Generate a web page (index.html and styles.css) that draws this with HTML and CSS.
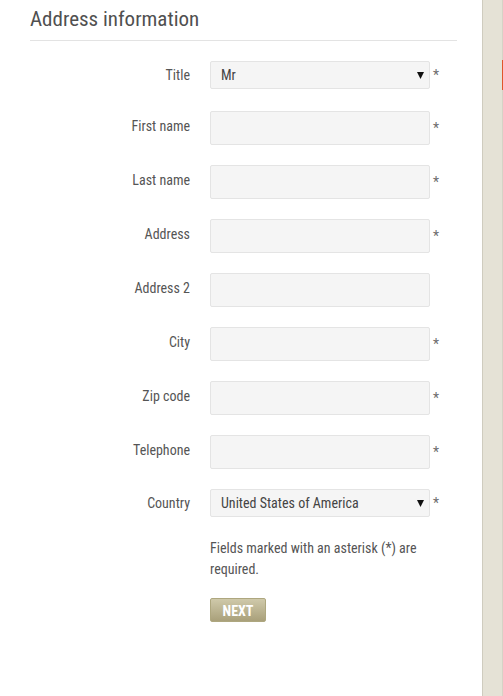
FILE: index.html
```
<!DOCTYPE html>
<html lang="en">
<head>
<meta charset="utf-8">
<title>Address information</title>
<link rel="stylesheet" href="styles.css">
</head>
<body>
<div class="page">
  <main class="content">
    <h2 class="heading">Address information</h2>
    <form class="form">
      <div class="row row-select row-first">
        <label class="label" for="title">Title</label>
        <div class="select-wrap">
          <select id="title" class="field select"><option>Mr</option><option>Mrs</option><option>Ms</option></select>
          <svg class="arrow" width="7" height="7" viewBox="0 0 7 7"><path d="M0 0h7L3.5 7z" fill="#111"/></svg>
        </div>
        <span class="req">*</span>
      </div>
      <div class="row">
        <label class="label" for="first">First name</label>
        <input id="first" class="field" type="text">
        <span class="req">*</span>
      </div>
      <div class="row">
        <label class="label" for="last">Last name</label>
        <input id="last" class="field" type="text">
        <span class="req">*</span>
      </div>
      <div class="row">
        <label class="label" for="addr">Address</label>
        <input id="addr" class="field" type="text">
        <span class="req">*</span>
      </div>
      <div class="row">
        <label class="label" for="addr2">Address 2</label>
        <input id="addr2" class="field" type="text">
      </div>
      <div class="row">
        <label class="label" for="city">City</label>
        <input id="city" class="field" type="text">
        <span class="req">*</span>
      </div>
      <div class="row">
        <label class="label" for="zip">Zip code</label>
        <input id="zip" class="field" type="text">
        <span class="req">*</span>
      </div>
      <div class="row">
        <label class="label" for="tel">Telephone</label>
        <input id="tel" class="field" type="text">
        <span class="req">*</span>
      </div>
      <div class="row row-select">
        <label class="label" for="country">Country</label>
        <div class="select-wrap">
          <select id="country" class="field select"><option>United States of America</option><option>Canada</option></select>
          <svg class="arrow" width="7" height="7" viewBox="0 0 7 7"><path d="M0 0h7L3.5 7z" fill="#111"/></svg>
        </div>
        <span class="req">*</span>
      </div>
      <div class="row row-note">
        <p class="note">Fields marked with an asterisk (*) are required.</p>
      </div>
      <div class="row row-action">
        <button type="button" class="btn-next">NEXT</button>
      </div>
    </form>
  </main>
  <aside class="sidebar"><span class="sidebar-mark"></span></aside>
</div>
</body>
</html>
```

FILE: styles.css
```
* { box-sizing: border-box; }

html, body {
  margin: 0;
  padding: 0;
  background: #fff;
}

body {
  font-family: Roboto, "Liberation Sans", sans-serif;
  font-stretch: condensed;
  color: #555;
  font-size: 14px;
}

.page {
  display: flex;
  min-height: 696px;
}

.content {
  width: 482px;
  padding: 0 25px 0 30px;
}

.heading {
  margin: 0;
  padding-top: 6px;
  font-size: 21px;
  line-height: 26px;
  font-weight: 400;
  color: #505050;
  border-bottom: 1px solid #e3e3e3;
  padding-bottom: 8px;
}

.form {
  display: flex;
  flex-direction: column;
  gap: 20px;
  padding-top: 20px;
}

.row {
  display: grid;
  grid-template-columns: 160px 220px auto;
  column-gap: 20px;
  align-items: center;
}

.row-first { margin-bottom: 2px; }

.label {
  text-align: right;
  line-height: 20px;
  padding-bottom: 4px;
  color: #555;
}

.row-select .label { padding-bottom: 0; }

.field {
  width: 220px;
  height: 34px;
  margin: 0;
  background: #f5f5f5;
  border: 1px solid #e4e4e4;
  border-radius: 2px;
  font-family: inherit;
  font-stretch: condensed;
  font-size: 14px;
  color: #444;
  padding: 0 10px;
  outline: none;
}

.select-wrap {
  position: relative;
  width: 220px;
}

.select {
  display: block;
  height: 28px;
  appearance: none;
  -webkit-appearance: none;
  padding-left: 10px;
}

.arrow {
  position: absolute;
  right: 6px;
  top: 11px;
  pointer-events: none;
}

.req {
  margin-left: -17px;
  color: #6d6d6d;
  font-size: 14px;
  line-height: 20px;
}

.row-note, .row-action { grid-template-columns: 160px 220px; }

.note {
  grid-column: 2;
  margin: 1px 0 0;
  line-height: 21px;
  color: #555;
}

.row-action { margin-top: -2px; }

.btn-next {
  grid-column: 2;
  justify-self: start;
  width: 56px;
  height: 24px;
  padding: 2px 0 0;
  border: 1px solid #aea77f;
  border-radius: 2px;
  background: linear-gradient(#cfc9aa, #a9a07a);
  color: #fff;
  font-family: inherit;
  font-stretch: condensed;
  font-weight: 700;
  font-size: 14px;
  line-height: 20px;
  cursor: pointer;
}

.sidebar {
  position: relative;
  flex: 1;
  background: #e5e2d6;
  border-left: 1px solid #cfccbf;
  border-right: 1px solid #d6d3c6;
}

.sidebar-mark {
  position: absolute;
  right: -1px;
  top: 60px;
  width: 1px;
  height: 30px;
  background: #e0552a;
}
```
